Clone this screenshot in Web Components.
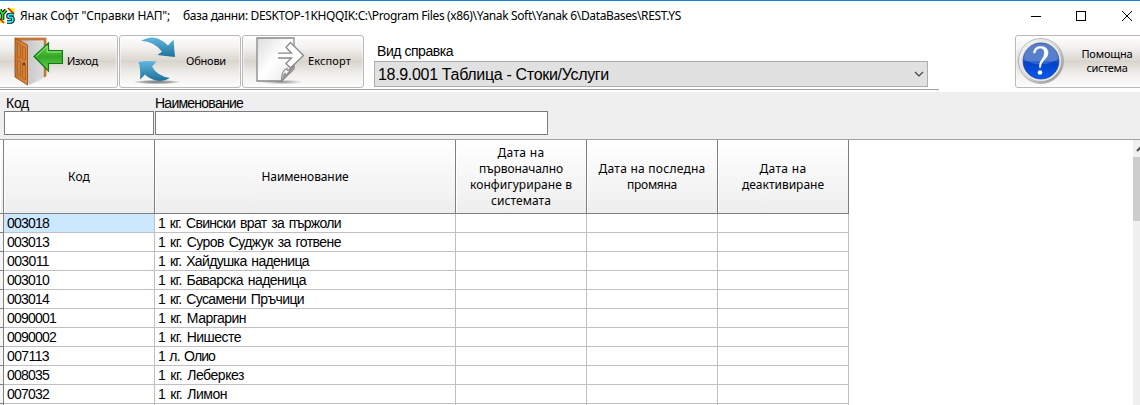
<!DOCTYPE html>
<html lang="bg">
<head>
<meta charset="utf-8">
<title>Справки НАП</title>
<style>
html,body{margin:0;height:100%;overflow:hidden;background:#fff}
</style>
</head>
<body>
<report-window></report-window>
<script>
const define = (name, html, setup) => {
  const t = document.createElement('template');
  t.innerHTML = html;
  customElements.define(name, class extends HTMLElement {
    connectedCallback() {
      if (this.shadowRoot) return;
      this.attachShadow({mode: 'open'}).append(t.content.cloneNode(true));
      if (setup) setup.call(this, this.shadowRoot);
    }
  });
};

/* One line of text, tracked so that it fills the width given in "w". */
define('fit-text', `<style>:host{display:inline-block;white-space:pre;vertical-align:top}span{display:inline-block}</style><span><slot></slot></span>`,
function (root) {
  const w = parseFloat(this.getAttribute('w'));
  if (!w) return;
  const span = root.querySelector('span');
  const n = this.textContent.length;
  const gap = (w - span.getBoundingClientRect().width) / n;
  span.style.letterSpacing = gap.toFixed(3) + 'px';
});

define('title-bar', `<style>
:host{display:flex;height:32px;border-top:1px solid #1a7fd4;align-items:center;box-sizing:border-box;font:12px/16px "Noto Sans",sans-serif;color:#000}
.logo{width:15px;height:17px;margin-right:5px;margin-top:-3px}
fit-text{margin-top:-1px}
.gap{width:13px}
.sys{margin-left:auto;display:flex;align-items:center;margin-right:7px}
.sys svg{display:block}
</style>
<svg class="logo" viewBox="0 0 15 17"><path d="M6 1h8.500v7z" fill="#ffee20"/><path d="M8 1l6 6" stroke="#e00000" stroke-width="1.200"/><path d="M0 10l6 6H0z" fill="#ffee20"/><path d="M0 12l4 4" stroke="#e00000" stroke-width="1.200"/><path d="M0 3l2.500 4L6 3M2.500 7v6" fill="none" stroke="#000" stroke-width="3.600"/><path d="M13.500 7.500H10Q8 7.500 8 9t2 1.500h1.500Q13 10.500 13 12.500T11 15H7" fill="none" stroke="#000" stroke-width="3.600"/><path d="M0 3l2.500 4L6 3M2.500 7v6" fill="none" stroke="#30e030" stroke-width="1.800"/><path d="M13.500 7.500H10Q8 7.500 8 9t2 1.500h1.500Q13 10.500 13 12.500T11 15H7" fill="none" stroke="#20e8f0" stroke-width="1.800"/></svg>
<fit-text w="150">Янак Софт "Справки НАП";</fit-text><span class="gap"></span><fit-text w="498">база данни: DESKTOP-1KHQQIK:C:\\Program Files (x86)\\Yanak Soft\\Yanak 6\\DataBases\\REST.YS</fit-text>
<div class="sys"><svg width="102" height="12" viewBox="0 0 102 12" shape-rendering="crispEdges" fill="none" stroke="#000" style="margin-top:-2px"><path d="M0 6.500h10"/><rect x="45.500" y="1.500" width="9" height="9"/><path d="M91 1l10 10M101 1L91 11" shape-rendering="auto"/></svg></div>`);

define('tool-button', `<style>
:host{display:flex;box-sizing:border-box;height:53px;border:1px solid #b9b9b9;border-radius:3px;align-items:center;background:linear-gradient(#fefefe 0,#f3f2f0 22%,#d9d5ce 50%,#f0efec 75%,#fdfdfd);font:11px/14px "Noto Sans",sans-serif;color:#000;box-shadow:inset 0 0 0 1px #ffffff70}
::slotted(svg){display:block;flex:none}
::slotted(fit-text){margin-top:-2px}
</style><slot></slot>`);

define('tool-bar', `<style>
:host{display:flex;height:60px;box-sizing:border-box;padding-top:3px;align-items:flex-start;position:relative}
.exit{width:121px;margin-left:-3px}
.mid{width:122px;margin-left:1px}
.help{width:135px;margin-left:auto;margin-right:-10px}
.help div{width:82px;margin-left:1px;margin-top:-1px;text-align:center;display:flex;flex-direction:column;align-items:center}
.pick{margin-left:10px;padding-top:8px;font:14px/16px "Liberation Sans",sans-serif}
.pick>fit-text{margin-left:3px}
.select{box-sizing:border-box;width:554px;height:26px;margin-top:2px;background:#e1e1e1;border:1px solid #adadad;display:flex;align-items:center;justify-content:space-between;padding:0 3px 0 3px;font-size:16px;line-height:24px}
.select fit-text{margin-top:1px}
.rule{position:absolute;left:0;top:57px;width:939px;height:1px;background:#a0a0a0}
</style>
<tool-button class="exit"><svg width="64" height="51" viewBox="0 0 64 51" style="margin-left:1px">
<defs><linearGradient id="w" x1="0" x2="1"><stop offset="0" stop-color="#c87028"/><stop offset="1" stop-color="#e08a40"/></linearGradient><linearGradient id="g" x2="0" y2="1"><stop stop-color="#70d048"/><stop offset=".5" stop-color="#32a828"/><stop offset="1" stop-color="#79cf58"/></linearGradient><linearGradient id="i" x1="0" x2="1"><stop stop-color="#aaa"/><stop offset="1" stop-color="#f2f2f2"/></linearGradient></defs>
<path d="M16 2h31v40L30 49z" fill="url(#i)"/><path d="M16 2h31v38l-2 1V4H18z" fill="#d9803a" stroke="#a85818" stroke-width=".6"/>
<path d="M28 48V9L45 4v37z" fill="#ccc" opacity=".5"/>
<path d="M16 2l12.500 7v40L16 41z" fill="url(#w)" stroke="#90480f" stroke-width=".8"/><path d="M18.500 7l3 2v13l-3-1zM23.500 10l3 2v12l-3-1zM18.500 25l3 1v14l-3-2zM23.500 28l3 1v15l-3-2z" fill="#d57f35" stroke="#a65c1c" stroke-width=".7"/><circle cx="25" cy="28" r="1.400" fill="#444"/><path d="M16.500 11v3M16.500 34v3" stroke="#888" stroke-width="2"/>
<path d="M35 20.500L49.500 7v7.500H63.500v13H49.500V35z" fill="url(#g)" stroke="#0c7c12" stroke-width="1.200"/><path d="M37 20.500l11-10.500v6h14" fill="none" stroke="#a9e58d"/>
</svg><fit-text w="31" style="margin-left:4px">Изход</fit-text></tool-button>
<tool-button class="mid"><svg width="50" height="51" viewBox="0 0 50 51" style="margin-left:12px">
<defs><linearGradient id="b" x2="0" y2="1"><stop stop-color="#5fb8e0"/><stop offset="1" stop-color="#1e7099"/></linearGradient><radialGradient id="s"><stop stop-color="#777"/><stop offset=".6" stop-color="#aaa"/><stop offset="1" stop-color="#aaa" stop-opacity="0"/></radialGradient></defs>
<ellipse cx="25" cy="46" rx="24" ry="2.200" fill="url(#s)"/>
<path d="M9 5Q19-1 27 3Q33 6 36 9.500L41.500 3.500L43 21Q33 20 25.500 19L30 15.500Q21 4.500 9 5z" fill="url(#b)"/>
<path d="M6.500 26Q16 24.500 24.500 25.500L20 30.500Q25 40 38 42Q32 46 24 44.500Q16 42 13 38.500L8 43.500Q9 34 6.500 26z" fill="url(#b)"/>
</svg><fit-text w="40" style="margin-left:4px">Обнови</fit-text></tool-button>
<tool-button class="mid"><svg width="50" height="51" viewBox="0 0 50 51" style="margin-left:12px">
<defs><linearGradient id="p" x2="1" y2="1"><stop stop-color="#ddd"/><stop offset=".5" stop-color="#fff"/><stop offset="1" stop-color="#e5e5e5"/></linearGradient><radialGradient id="s2"><stop stop-color="#888"/><stop offset="1" stop-color="#aaa" stop-opacity="0"/></radialGradient></defs>
<ellipse cx="27" cy="46" rx="22" ry="2.500" fill="url(#s2)"/>
<path d="M2 2h37v31L26.500 45H2z" fill="url(#p)" stroke="#888" stroke-width="1.300"/>
<path d="M26.500 45Q26.500 34 32 32.500Q31 37 39 30z" fill="#f4f4f4" stroke="#888" stroke-width="1.200"/><path d="M27.500 43q0-6 3-6.500 0 3 3 2z" fill="#999"/>
<path d="M23 17.200H36.500L31 11.200L35.500 6.500L48.500 19.500L35.500 32L31 27.500L36.500 22H23z" fill="#fff"/><path d="M23 17.200H36.500L31 11.200L35.500 6.500L48.500 19.500L35.500 32L31 27.500L36.500 22H23" fill="none" stroke="#888" stroke-width="1.300"/>
</svg><fit-text w="43" style="margin-left:3px">Експорт</fit-text></tool-button>
<div class="pick"><fit-text w="76">Вид справка</fit-text><div class="select"><fit-text w="231">18.9.001 Таблица - Стоки/Услуги</fit-text><svg width="10" height="8" viewBox="0 0 10 8"><path d="M1 2l4 4 4-4" fill="none" stroke="#444" stroke-width="1.200"/></svg></div></div>
<tool-button class="help"><svg width="48" height="51" viewBox="0 0 48 51" style="margin-left:1px">
<defs><linearGradient id="r" x2="1" y2="1"><stop stop-color="#fff"/><stop offset=".5" stop-color="#d8d8d8"/><stop offset="1" stop-color="#858585"/></linearGradient><linearGradient id="q" x2="0" y2="1"><stop stop-color="#3f64b8"/><stop offset=".5" stop-color="#3468c8"/><stop offset=".52" stop-color="#0641c4"/><stop offset="1" stop-color="#0758f0"/></linearGradient></defs>
<circle cx="24" cy="25" r="22.500" fill="url(#r)" stroke="#aaa" stroke-width=".8"/><circle cx="24" cy="25" r="20" fill="#e9e9e9"/><circle cx="24" cy="25" r="18" fill="url(#q)" stroke="#244a99" stroke-width=".8"/><path d="M6.500 22Q8 8 24 7.500Q40 8 41.500 22Q33 29 24 28Q13 29 6.500 22z" fill="#fff" opacity=".16"/>
<path d="M16.500 17Q17 10.500 23.500 10.500Q31 10.500 31 17Q31 20.500 26.500 24.500Q23.500 27.500 23.500 31.500H22.500Q22 27 25 23.500Q27.500 20.500 27.500 17Q27.500 12 23 12Q18.500 12.500 18 17z" fill="#fff" stroke="#fff" stroke-width=".7"/><circle cx="23" cy="36.500" r="2.300" fill="#fff"/></svg>
<div><fit-text w="51">Помощна</fit-text><fit-text w="41">система</fit-text></div></tool-button>
<div class="rule"></div>`);

define('filter-field', `<style>
:host{display:block;font:14px/16px "Liberation Sans",sans-serif}
div{box-sizing:border-box;height:24px;border:1px solid #7a7a7a;background:#fff}
::slotted(*){margin-left:var(--indent,0)}
</style><slot></slot><div></div>`);

define('filter-bar', `<style>
:host{display:flex;box-sizing:border-box;height:48px;background:#efefef;border-bottom:1px solid #a0a0a0;padding:3px 0 0 4px;gap:1px}
</style>
<filter-field style="width:150px;--indent:2px"><fit-text w="23">Код</fit-text></filter-field>
<filter-field style="width:393px"><fit-text w="88">Наименование</fit-text></filter-field>`);

define('data-grid', `<style>
:host{display:block;flex:none;width:849px;font:14px/19px "Liberation Sans",sans-serif;color:#000}
.row{display:grid;grid-template-columns:4px 151px 301px 131px 131px 131px;grid-template-rows:19px;height:19px}
.row>div{box-sizing:border-box;border-right:1px solid #c0c0c0;border-bottom:1px solid #c0c0c0;padding-left:3px;white-space:nowrap}
.row>div:nth-child(3){word-spacing:1.500px}
.row>.mark{border-color:#808080;padding:0;background:#f6f6f6}
.row.head{height:74px;grid-template-rows:74px;font:12px/16px "Noto Sans",sans-serif}
.row.head>div{border-color:#808080;padding:0;display:flex;flex-direction:column;align-items:center;justify-content:center;background:linear-gradient(#fff,#eee);box-shadow:inset 1px 0 #fff}
.row>.sel{background:#cce8ff}
</style>
<div class="row head"><div class="mark"></div><div><fit-text w="22">Код</fit-text></div><div><fit-text w="87">Наименование</fit-text></div>
<div><fit-text w="47">Дата на</fit-text><fit-text w="84">първоначално</fit-text><fit-text w="102">конфигуриране в</fit-text><fit-text w="60">системата</fit-text></div>
<div><fit-text w="107">Дата на последна</fit-text><fit-text w="50">промяна</fit-text></div>
<div><fit-text w="47">Дата на</fit-text><fit-text w="82">деактивиране</fit-text></div></div>`,
function (root) {
  const rows = [
    ['003018', '1 кг. Свински врат за пържоли', 183],
    ['003013', '1 кг. Суров Суджук за готвене', 183],
    ['003011', '1 кг. Хайдушка наденица', 151],
    ['003010', '1 кг. Баварска наденица', 148],
    ['003014', '1 кг. Сусамени Пръчици', 146],
    ['0090001', '1 кг. Маргарин', 88],
    ['0090002', '1 кг. Нишесте', 83],
    ['007113', '1 л. Олио', 57],
    ['008035', '1 кг. Леберкез', 86],
    ['007032', '1 кг. Лимон', 69],
    ['', '', 0]
  ];
  rows.forEach(([code, name, w], i) => {
    const r = document.createElement('div');
    r.className = 'row';
    r.innerHTML = '<div class="mark"></div>' +
      (code ? `<div class="${i ? '' : 'sel'}"><fit-text w="${code.length * 7}">${code}</fit-text></div><div><fit-text w="${w}">${name}</fit-text></div>` : '<div></div><div></div>') +
      '<div></div><div></div><div></div>';
    root.append(r);
  });
});

define('scroll-bar', `<style>
:host{display:flex;flex-direction:column;width:7px;margin-left:auto;background:#f0f0f0;overflow:hidden}
svg{display:block;flex:none;width:17px;height:17px}
div{height:64px;background:#cdcdcd}
</style><svg viewBox="0 0 17 17"><path d="M4 11l4.500-4.500L13 11" fill="none" stroke="#505050" stroke-width="2"/></svg><div></div>`);

define('report-window', `<style>
:host{display:flex;flex-direction:column;width:1140px;height:405px;overflow:hidden;background:#fff}
title-bar,tool-bar,filter-bar{flex:none}
main{display:flex;flex:1;min-height:0;overflow:hidden}
</style><title-bar></title-bar><tool-bar></tool-bar><filter-bar></filter-bar><main><data-grid></data-grid><scroll-bar></scroll-bar></main>`);
</script>
</body>
</html>
